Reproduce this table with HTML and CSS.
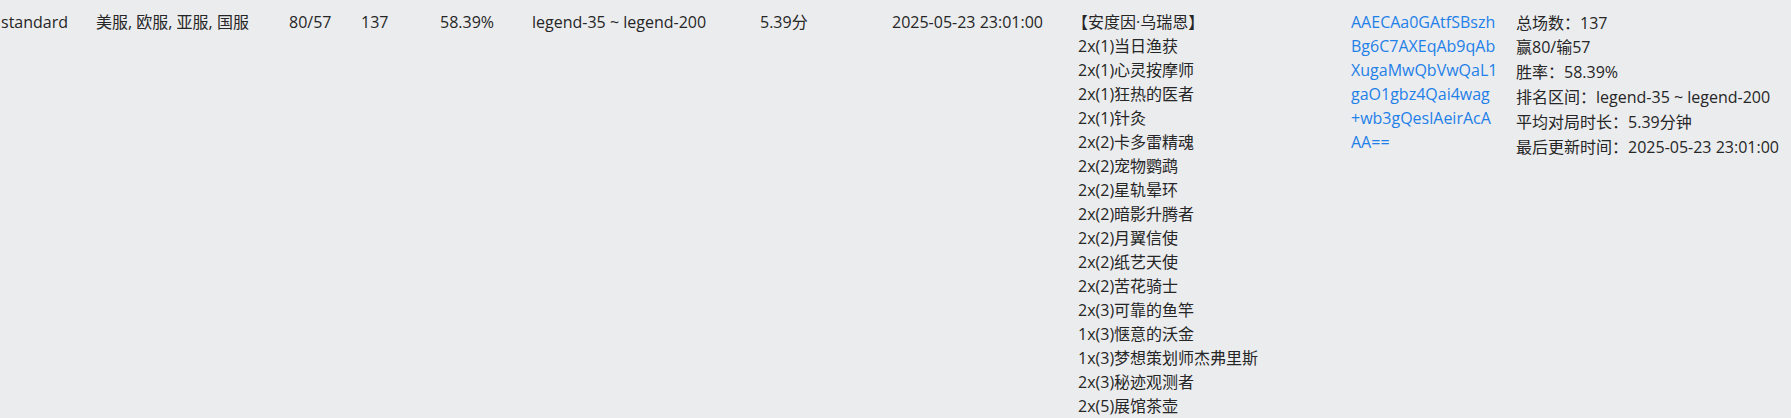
FILE: index.html
```html
<!DOCTYPE html>
<html lang="zh-CN">
<head>
<meta charset="utf-8">
<title>卡组统计</title>
<link rel="stylesheet" href="styles.css">
</head>
<body>
<div class="table">
  <div class="row">
    <div class="cell">standard</div>
    <div class="cell">美服, 欧服, 亚服, 国服</div>
    <div class="cell">80/57</div>
    <div class="cell">137</div>
    <div class="cell">58.39%</div>
    <div class="cell">legend-35 ~ legend-200</div>
    <div class="cell">5.39分</div>
    <div class="cell">2025-05-23 23:01:00</div>
    <div class="cell cards">
      <div class="hero">【安度因·乌瑞恩】</div>
      <div class="card">2x(1)当日渔获</div>
      <div class="card">2x(1)心灵按摩师</div>
      <div class="card">2x(1)狂热的医者</div>
      <div class="card">2x(1)针灸</div>
      <div class="card">2x(2)卡多雷精魂</div>
      <div class="card">2x(2)宠物鹦鹉</div>
      <div class="card">2x(2)星轨晕环</div>
      <div class="card">2x(2)暗影升腾者</div>
      <div class="card">2x(2)月翼信使</div>
      <div class="card">2x(2)纸艺天使</div>
      <div class="card">2x(2)苦花骑士</div>
      <div class="card">2x(3)可靠的鱼竿</div>
      <div class="card">1x(3)惬意的沃金</div>
      <div class="card">1x(3)梦想策划师杰弗里斯</div>
      <div class="card">2x(3)秘迹观测者</div>
      <div class="card">2x(5)展馆茶壶</div>
    </div>
    <div class="cell code">AAECAa0GAtfSBszh<br>Bg6C7AXEqAb9qAb<br>XugaMwQbVwQaL1<br>gaO1gbz4Qai4wag<br>+wb3gQeslAeirAcA<br>AA==</div>
    <div class="cell stats">
      <div>总场数<span class="colon">：</span>137</div>
      <div>赢80/输57</div>
      <div>胜率<span class="colon">：</span>58.39%</div>
      <div>排名区间<span class="colon">：</span>legend-35 ~ legend-200</div>
      <div>平均对局时长<span class="colon">：</span>5.39分钟</div>
      <div>最后更新时间<span class="colon">：</span>2025-05-23 23:01:00</div>
    </div>
  </div>
</div>
</body>
</html>
```
FILE: styles.css
```css
html, body {
  margin: 0;
  padding: 0;
  background: #ebecee;
}
body {
  font-family: "Open Sans", "Noto Sans CJK SC", sans-serif;
  font-size: 16px;
  line-height: 24px;
  color: #262626;
}
.table {
  width: 1791px;
}
.row {
  display: grid;
  grid-template-columns: 95px 193px 72px 79px 92px 228px 132px 186px 273px 165px 1fr;
  padding: 10px 0 0 1px;
}
.cell {
  white-space: nowrap;
}
.hero {
  margin-left: -6px;
}
.code {
  color: #1e80e8;
}
.colon {
  font-family: "Noto Sans CJK TC", sans-serif;
}
```
